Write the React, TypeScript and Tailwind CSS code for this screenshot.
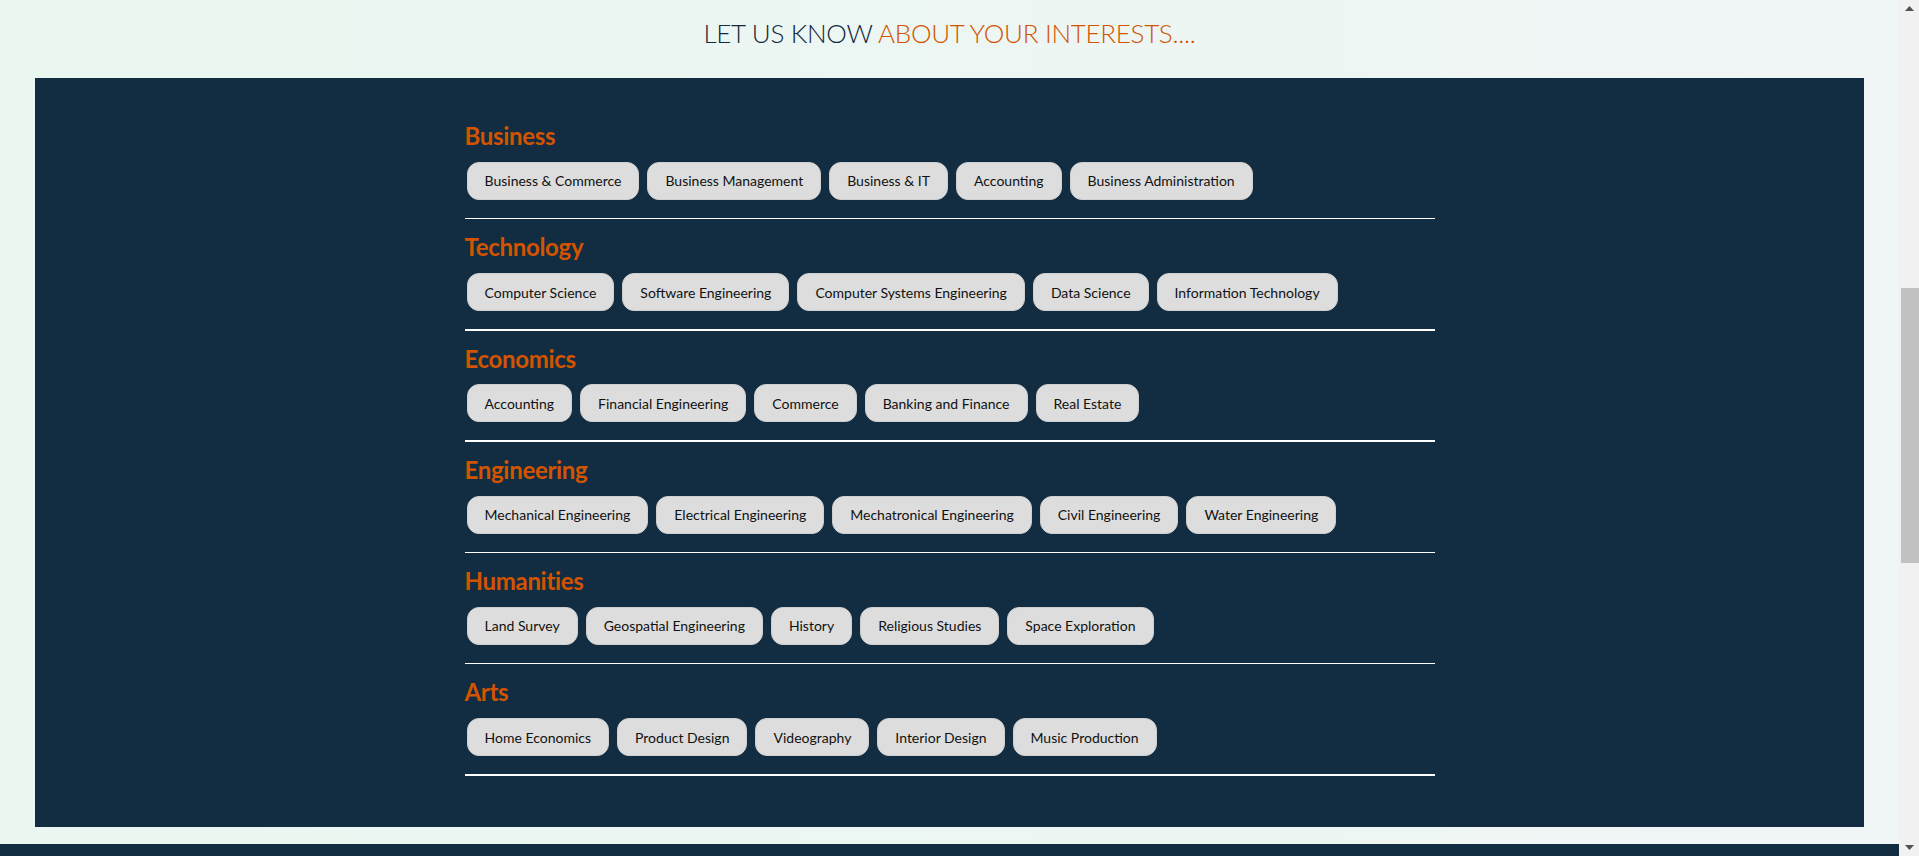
const sections: { title: string; items: string[] }[] = [
  {
    title: 'Business',
    items: ['Business & Commerce', 'Business Management', 'Business & IT', 'Accounting', 'Business Administration'],
  },
  {
    title: 'Technology',
    items: ['Computer Science', 'Software Engineering', 'Computer Systems Engineering', 'Data Science', 'Information Technology'],
  },
  {
    title: 'Economics',
    items: ['Accounting', 'Financial Engineering', 'Commerce', 'Banking and Finance', 'Real Estate'],
  },
  {
    title: 'Engineering',
    items: ['Mechanical Engineering', 'Electrical Engineering', 'Mechatronical Engineering', 'Civil Engineering', 'Water Engineering'],
  },
  {
    title: 'Humanities',
    items: ['Land Survey', 'Geospatial Engineering', 'History', 'Religious Studies', 'Space Exploration'],
  },
  {
    title: 'Arts',
    items: ['Home Economics', 'Product Design', 'Videography', 'Interior Design', 'Music Production'],
  },
];

function Arrow({ down }: { down?: boolean }) {
  return (
    <div className="h-[17px] flex items-center justify-center">
      <svg width="9" height="5" viewBox="0 0 9 5" className={down ? 'rotate-180' : ''}>
        <polygon points="4.5,0 9,5 0,5" fill="#505050" />
      </svg>
    </div>
  );
}

export default function App() {
  return (
    <div className="flex h-screen w-full overflow-hidden bg-gradient-to-r from-[#e9f7f0] to-[#f0f5f5] font-['Lato',sans-serif]">
      <main className="flex-1 flex flex-col min-w-0">
        <header className="h-[78px] shrink-0 pt-[18px] text-center">
          <h1 className="text-[26px] leading-[1.2] font-light tracking-[-0.3px]">
            <span className="text-[#14293d]">LET US KNOW </span>
            <span className="text-[#d35400]">ABOUT YOUR INTERESTS....</span>
          </h1>
        </header>

        <section className="mx-[35px] h-[749px] shrink-0 bg-[#122d42] pt-[44px]">
          <div className="max-w-[970px] mx-auto">
            {sections.map((s, i) => (
              <div key={s.title} className={i === 0 ? '' : 'mt-[14px]'}>
                <h2 className="text-[24px] leading-[1.2] font-bold tracking-[-0.3px] text-[#d35400]">{s.title}</h2>
                <div className="mt-[11px] flex gap-2 pl-[2px]">
                  {s.items.map((item) => (
                    <button
                      key={item}
                      type="button"
                      className="h-[38px] px-[17px] rounded-xl border border-[#cfcfcf] bg-[#dddddd] text-[14px] text-[#111] font-['Lato',sans-serif]"
                    >
                      {item}
                    </button>
                  ))}
                </div>
                <div className="mt-[18px] h-[1.5px] bg-white" />
              </div>
            ))}
          </div>
        </section>

        <div className="mt-[17px] flex-1 bg-[#122d42]" />
      </main>

      <aside className="w-[20px] shrink-0 bg-[#f1f1f1] flex flex-col">
        <Arrow />
        <div className="mt-[271px] ml-[2px] h-[275px] bg-[#c1c1c1]" />
        <div className="flex-1" />
        <Arrow down />
      </aside>
    </div>
  );
}
